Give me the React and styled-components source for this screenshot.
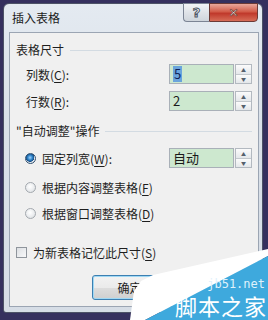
import React from "react";
import styled, { createGlobalStyle } from "styled-components";

const Global = createGlobalStyle`
  body {
    margin: 0;
    background: #35305e;
    font-family: "Noto Sans CJK SC", "Noto Sans", sans-serif;
  }
`;

export default function App() {
  return (
    <Page>
      <Global />
      <Frame>
        <TitleBar>
          <Title>插入表格</Title>
          <Caption>
            <HelpButton>?</HelpButton>
            <CloseButton>✕</CloseButton>
          </Caption>
        </TitleBar>
        <Panel>
          <GroupHeader>
            <span>表格尺寸</span>
            <Rule />
          </GroupHeader>
          <FieldRow $top={6}>
            <span>
              列数(<u>C</u>):
            </span>
            <SpinBox value="5" selected />
          </FieldRow>
          <FieldRow $top={7}>
            <span>
              行数(<u>R</u>):
            </span>
            <SpinBox value="2" />
          </FieldRow>

          <GroupHeader $top={12}>
            <span>"自动调整"操作</span>
            <Rule />
          </GroupHeader>
          <FieldRow $top={9}>
            <RadioLabel>
              <Radio $checked />
              <span>
                固定列宽(<u>W</u>):
              </span>
            </RadioLabel>
            <SpinBox value="自动" />
          </FieldRow>
          <FieldRow $top={9}>
            <RadioLabel>
              <Radio />
              <span>
                根据内容调整表格(<u>F</u>)
              </span>
            </RadioLabel>
          </FieldRow>
          <FieldRow $top={6}>
            <RadioLabel>
              <Radio />
              <span>
                根据窗口调整表格(<u>D</u>)
              </span>
            </RadioLabel>
          </FieldRow>

          <CheckRow>
            <CheckBox />
            <span>
              为新表格记忆此尺寸(<u>S</u>)
            </span>
          </CheckRow>

          <ButtonRow>
            <Button $default>确定</Button>
          </ButtonRow>
        </Panel>
      </Frame>

      <Watermark>
        <svg width="140" height="75" viewBox="0 0 140 75">
          <polygon
            points="2,75 6,46 13,36 25,30 140,4 140,11 17,75"
            fill="#ffffff"
          />
          <polygon points="17,75 140,11 140,75" fill="#3ea9dd" />
        </svg>
        <MarkDomain>jb51.net</MarkDomain>
        <MarkName>脚本之家</MarkName>
      </Watermark>
    </Page>
  );
}

function SpinBox({ value, selected }) {
  return (
    <Spin>
      <SpinField>{selected ? <Selected>{value}</Selected> : value}</SpinField>
      <SpinButtons>
        <SpinArrow>▲</SpinArrow>
        <SpinArrow>▼</SpinArrow>
      </SpinButtons>
    </Spin>
  );
}

const Page = styled.div`
  position: relative;
  width: 268px;
  height: 320px;
  overflow: hidden;
  padding: 3px 0 0 3px;
  box-sizing: border-box;
`;

const Frame = styled.div`
  width: 260px;
  height: 310px;
  box-sizing: border-box;
  border: 1px solid #4c5266;
  border-radius: 6px 6px 3px 3px;
  background: linear-gradient(#e4eaf1, #d9e0e8 40%, #d6dde6);
  display: flex;
  flex-direction: column;
`;

const TitleBar = styled.div`
  height: 28px;
  display: flex;
  justify-content: space-between;
  align-items: flex-start;
  padding: 0 4px 0 8px;
`;

const Title = styled.div`
  font-size: 12px;
  line-height: 28px;
  color: #1b1b1b;
`;

const Caption = styled.div`
  display: flex;
  margin-top: -1px;
`;

const HelpButton = styled.div`
  width: 26px;
  height: 19px;
  box-sizing: border-box;
  border: 1px solid #7b8494;
  border-right: none;
  border-radius: 0 0 0 4px;
  background: linear-gradient(#f2f4f7, #dfe3e8 50%, #cfd5dc);
  display: flex;
  align-items: center;
  justify-content: center;
  font-family: "DejaVu Sans", sans-serif;
  font-weight: bold;
  font-size: 13px;
  color: #f4f6f8;
  -webkit-text-stroke: 1px #4d5563;
`;

const CloseButton = styled.div`
  width: 49px;
  height: 19px;
  box-sizing: border-box;
  border: 1px solid #6b3a36;
  border-radius: 0 0 4px 0;
  background: linear-gradient(#e9a89b, #d25c49 45%, #c0392b 55%, #d66c57);
  display: flex;
  align-items: center;
  justify-content: center;
  font-family: "DejaVu Sans", sans-serif;
  font-weight: bold;
  font-size: 12px;
  color: #ffffff;
  -webkit-text-stroke: 0.6px #5d2a24;
`;

const Panel = styled.div`
  flex: 1;
  margin: 0 3px 5px 5px;
  border: 1px solid #9ba5b3;
  background: #f0f0f0;
  padding: 9px 6px 6px 6px;
  display: flex;
  flex-direction: column;
  font-size: 12px;
  color: #1e1e1e;
  u {
    text-decoration-thickness: 1px;
    text-underline-offset: 2px;
  }
`;

const GroupHeader = styled.div`
  height: 16px;
  margin-top: ${(p) => p.$top || 0}px;
  display: flex;
  align-items: center;
  gap: 6px;
  line-height: 16px;
`;

const Rule = styled.div`
  flex: 1;
  height: 1px;
  background: #d3dbe2;
`;

const FieldRow = styled.div`
  height: 20px;
  margin-top: ${(p) => p.$top || 0}px;
  padding-left: 10px;
  display: flex;
  align-items: center;
  justify-content: space-between;
`;

const RadioLabel = styled.div`
  display: flex;
  align-items: center;
  gap: 6px;
  margin-left: -1px;
`;

const Radio = styled.div`
  width: 11px;
  height: 11px;
  box-sizing: border-box;
  border-radius: 50%;
  border: 1px solid ${(p) => (p.$checked ? "#2f4f6f" : "#a3a8ae")};
  background: ${(p) =>
    p.$checked
      ? "radial-gradient(circle at 45% 40%, #9fd3ff 0, #2a7fc4 35%, #1b4f86 55%, #e9edf1 60%, #cfd5dc 100%)"
      : "radial-gradient(circle at 45% 40%, #ffffff 0, #eceef0 50%, #d4d8dc 100%)"};
`;

const Spin = styled.div`
  display: flex;
  width: 83px;
  height: 20px;
`;

const SpinField = styled.div`
  flex: 1;
  box-sizing: border-box;
  border: 1px solid #a9b0b8;
  background: #cde8cf;
  padding-left: 3px;
  font-size: 13px;
  line-height: 18px;
  color: #1a1a1a;
`;

const Selected = styled.span`
  display: inline-block;
  line-height: 16px;
  padding: 0 1px;
  background: #6aa4dc;
  color: #0f2358;
`;

const SpinButtons = styled.div`
  width: 17px;
  margin-left: 1px;
  display: flex;
  flex-direction: column;
  border: 1px solid #b3b9c0;
  box-sizing: border-box;
`;

const SpinArrow = styled.div`
  flex: 1;
  display: flex;
  align-items: center;
  justify-content: center;
  font-size: 5px;
  line-height: 1;
  color: #55606c;
  background: linear-gradient(#fbfbfb, #e4e7ea);
  & + & {
    border-top: 1px solid #c3c8cd;
  }
`;

const CheckRow = styled.div`
  height: 16px;
  margin-top: 21px;
  display: flex;
  align-items: center;
  gap: 6px;
`;

const CheckBox = styled.div`
  width: 11px;
  height: 11px;
  box-sizing: border-box;
  border: 1px solid #8f959c;
  background: linear-gradient(135deg, #dcdfe3, #f7f8f9);
`;

const ButtonRow = styled.div`
  margin-top: 15px;
  padding-left: 76px;
  display: flex;
`;

const Button = styled.div`
  width: 75px;
  height: 25px;
  box-sizing: border-box;
  border: 1px solid ${(p) => (p.$default ? "#3c7fb1" : "#707070")};
  border-radius: 3px;
  box-shadow: ${(p) => (p.$default ? "inset 0 0 0 1px #9fd8f4" : "inset 0 0 0 1px #fcfcfc")};
  background: linear-gradient(#f2f2f2, #ebebeb 50%, #dddddd 51%, #cfcfcf);
  display: flex;
  align-items: center;
  justify-content: center;
  font-size: 12px;
  color: #1e1e1e;
`;

const Watermark = styled.div`
  position: absolute;
  right: 0;
  bottom: 0;
  width: 140px;
  height: 75px;
  svg {
    display: block;
  }
`;

const MarkDomain = styled.div`
  position: absolute;
  right: 3px;
  top: 33px;
  font-family: "DejaVu Sans Mono", monospace;
  font-size: 12px;
  line-height: 13px;
  color: #dff1fb;
`;

const MarkName = styled.div`
  position: absolute;
  right: 1px;
  top: 48px;
  font-size: 22px;
  line-height: 24px;
  height: 24px;
  color: #ffffff;
  letter-spacing: 1px;
`;
